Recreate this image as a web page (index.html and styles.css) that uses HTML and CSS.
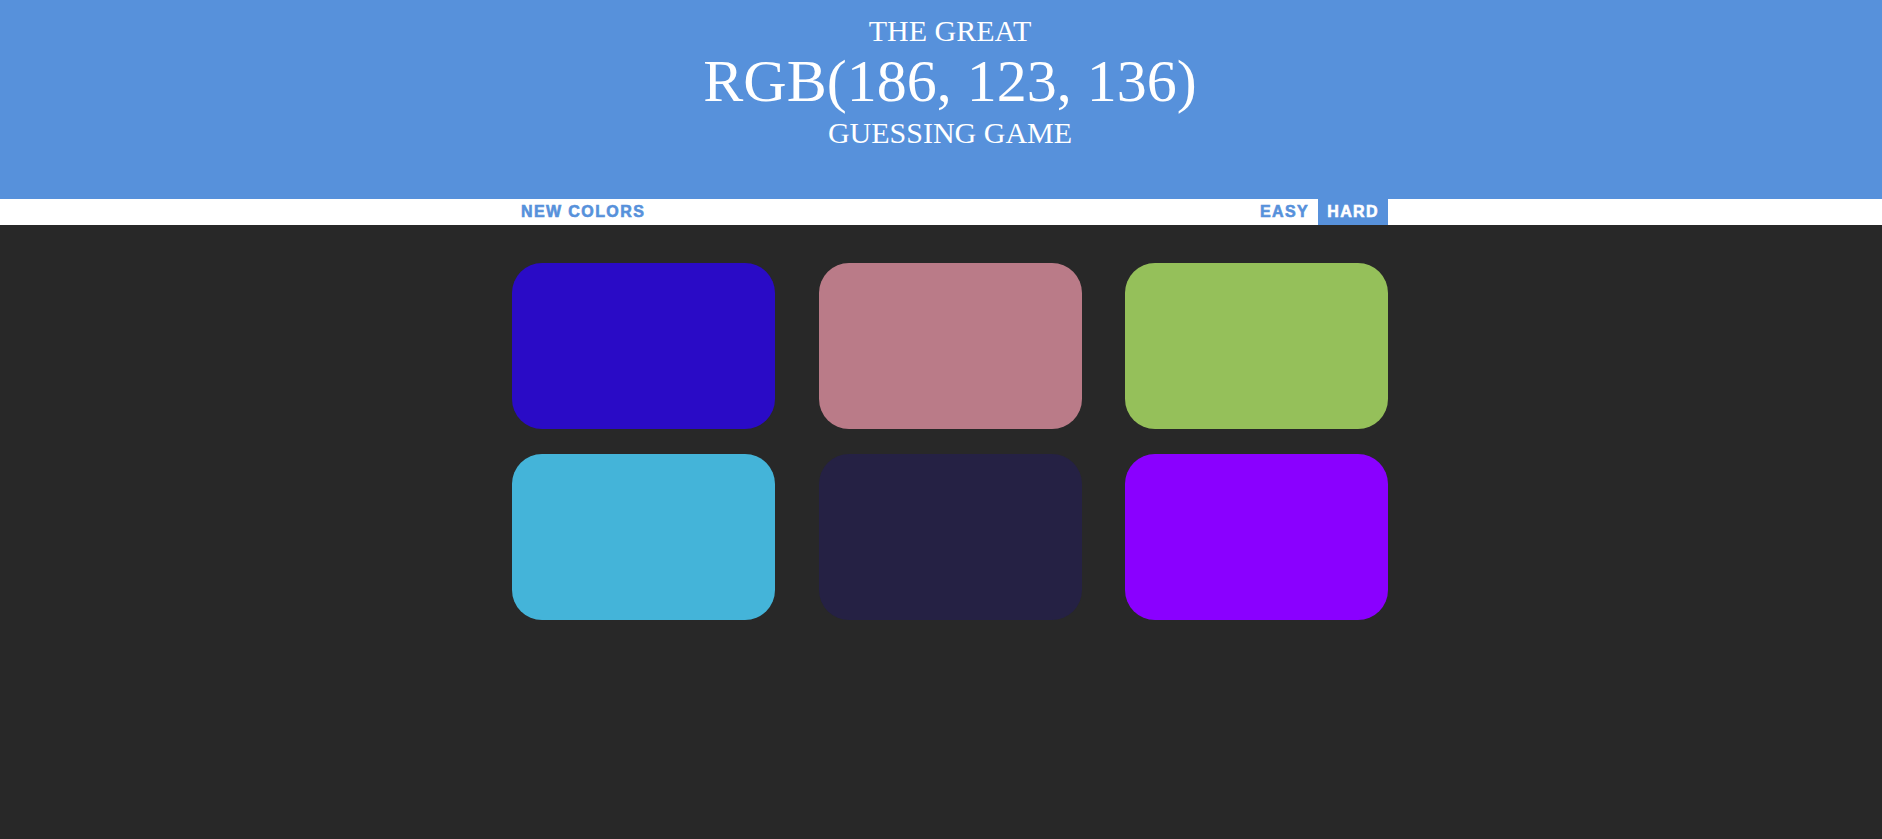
FILE: index.html
```html
<!DOCTYPE html>
<html lang="en">
<head>
<meta charset="utf-8">
<title>Color Game</title>
<link rel="stylesheet" href="styles.css">
</head>
<body>
<div class="page">
  <header class="header">
    <h1 class="title">
      <span class="title-small">The Great</span>
      <span class="title-big">RGB(186, 123, 136)</span>
      <span class="title-bottom">Guessing Game</span>
    </h1>
  </header>
  <nav class="stripe">
    <div class="stripe-inner">
      <button class="btn">New Colors</button>
      <span class="spacer"></span>
      <button class="btn">Easy</button>
      <button class="btn selected">Hard</button>
    </div>
  </nav>
  <main class="board">
    <div class="square sq1"></div>
    <div class="square sq2"></div>
    <div class="square sq3"></div>
    <div class="square sq4"></div>
    <div class="square sq5"></div>
    <div class="square sq6"></div>
  </main>
</div>
</body>
</html>
```
FILE: styles.css
```css
html, body {
  margin: 0;
  padding: 0;
  height: 100%;
  background: #282828;
}

.page {
  min-height: 100%;
  padding-left: 18px;
  background: #282828;
}

.header {
  background: #5791db;
  margin-left: -18px;
  padding: 14px 0 49px 18px;
}

.title {
  margin: 0;
  font-family: "Liberation Serif", "Times New Roman", serif;
  font-weight: normal;
  color: #ffffff;
  text-transform: uppercase;
  text-align: center;
  display: flex;
  flex-direction: column;
}

.title-small {
  font-size: 30px;
  line-height: 33px;
}

.title-big {
  font-size: 60px;
  line-height: 69px;
}

.title-bottom {
  font-size: 30px;
  line-height: 34px;
}

.stripe {
  background: #ffffff;
  height: 26px;
  margin-left: -18px;
  padding-left: 18px;
}

.stripe-inner {
  width: 876px;
  height: 100%;
  margin: 0 auto;
  display: flex;
}

.spacer {
  flex: 1;
}

.btn {
  border: none;
  background: none;
  margin: 0;
  padding: 0 9px;
  height: 100%;
  font-family: "Liberation Sans", Arial, sans-serif;
  font-size: 16px;
  line-height: 26px;
  font-weight: 700;
  letter-spacing: 1.4px;
  -webkit-text-stroke: 0.6px currentColor;
  text-transform: uppercase;
  color: #5791db;
  cursor: pointer;
}

.btn.selected {
  background: #5791db;
  color: #ffffff;
}

.board {
  width: 876px;
  margin: 38px auto 0;
  display: grid;
  grid-template-columns: repeat(3, 1fr);
  column-gap: 43.5px;
  row-gap: 25px;
}

.square {
  height: 166px;
  border-radius: 30px;
}

.sq1 { background: #2a0bc6; }
.sq2 { background: #ba7b88; }
.sq3 { background: #95c05a; }
.sq4 { background: #44b4d9; }
.sq5 { background: #252144; }
.sq6 { background: #8a00ff; }
```
